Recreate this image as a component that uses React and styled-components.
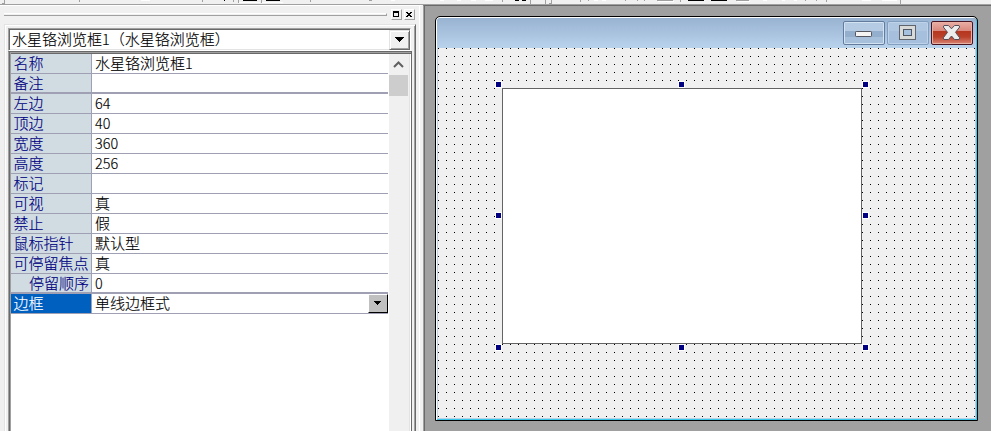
import React from "react";
import styled, { createGlobalStyle } from "styled-components";

const Global = createGlobalStyle`
  * { box-sizing: border-box; }
  body { margin: 0; background: #f0f0f0; overflow: hidden; }
`;

const Screen = styled.div`
  width: 991px;
  height: 431px;
  display: flex;
  flex-direction: column;
  overflow: hidden;
  background: #f0f0f0;
  color: #000;
  font: 300 15px/17px "Noto Sans CJK SC", sans-serif;
  -webkit-text-stroke: 0.15px;
`;
const Toolbar = styled.header`
  height: 5px;
  flex: none;
  border-bottom: 1px solid #a0a0a0;
  svg { display: block; }
`;
const Workspace = styled.main`
  flex: 1;
  display: flex;
  min-height: 0;
`;
const Sidebar = styled.aside`
  width: 423px;
  flex: none;
  display: flex;
  flex-direction: column;
  border-top: 1px solid #fff;
  border-right: 3px solid #f0f0f0;
  box-shadow: inset -1px 0 #fff;
`;
const Caption = styled.div`
  height: 18px;
  flex: none;
  display: flex;
  align-items: flex-start;
  padding: 3px 0 0 4px;
`;
const Grip = styled.div`
  flex: 1;
  height: 3px;
  margin: 4px 4px 0 0;
  border-top: 1px solid #fff;
  border-bottom: 1px solid #a0a0a0;
  border-right: 1px solid #a0a0a0;
`;
const CaptionButton = styled.span`
  width: 11px;
  height: 11px;
  margin-right: 2px;
  display: grid;
  place-items: center;
  border: 1px solid;
  border-color: #fff #a0a0a0 #a0a0a0 #fff;
  svg { display: block; }
`;
const CaptionEnd = styled.div`
  width: 3px;
`;
const Frame = styled.div`
  width: 412px;
  flex: 1;
  min-height: 0;
  margin-left: 4px;
  display: flex;
  flex-direction: column;
  border-top: 1px solid #e3e3e3;
  border-left: 1px solid #e3e3e3;
  border-right: 1px solid #696969;
  box-shadow: inset 1px 1px #fff, inset -1px 0 #a0a0a0;
  padding: 3px 3px 0;
`;
const Combo = styled.div`
  width: 403px;
  height: 23px;
  flex: none;
  display: flex;
  background: #fff;
  border-top: 1px solid #a0a0a0;
  border-left: 1px solid #a0a0a0;
  border-right: 1px solid #fff;
  border-bottom: 1px solid #fff;
  box-shadow: inset 1px 1px #696969, inset 0 -1px #e3e3e3;
  padding: 1px 0 0 3px;
`;
const ComboText = styled.div`
  flex: 1;
  white-space: pre;
`;
const DropButton = styled.span`
  width: ${(p) => (p.$small ? 20 : 21)}px;
  height: ${(p) => (p.$small ? 19 : 20)}px;
  flex: none;
  display: grid;
  place-items: center;
  background: ${(p) => (p.$small ? "#c0c0c0" : "#f0f0f0")};
  border: 1px solid;
  border-color: ${(p) => (p.$small ? "#fff #000 #000 #fff" : "#e3e3e3 #696969 #696969 #e3e3e3")};
  box-shadow: ${(p) => (p.$small ? "none" : "inset 1px 1px #fff, inset -1px -1px #a0a0a0")};
  svg { display: block; }
`;
const ListBox = styled.div`
  width: 404px;
  flex: 1;
  min-height: 0;
  display: flex;
  background: #fff;
  border-top: 1px solid #696969;
  border-left: 1px solid #a0a0a0;
  border-right: 1px solid #696969;
  box-shadow: inset 1px 0 #696969, inset 2px 1px #a0a0a0, inset 0 2px #696969,
    inset -1px 0 #fff, inset -2px 0 #e3e3e3;
  padding: 2px 2px 0;
`;
const Rows = styled.div`
  width: 378px;
  flex: none;
`;
const Row = styled.div`
  height: 20px;
  display: flex;
  width: 377px;
  border-bottom: ${(p) => (p.$thick ? 2 : 1)}px solid #a0a0b4;
`;
const Label = styled.div`
  width: 81px;
  flex: none;
  padding-left: ${(p) => (p.$indent ? 18 : 2.5)}px;
  white-space: nowrap;
  border-right: 1px solid #a0a0b4;
  background: ${(p) => (p.$active ? "#0060c0" : "#d0dce2")};
  color: ${(p) => (p.$active ? "#fff" : "#000080")};
`;
const Value = styled.div`
  flex: 1;
  display: flex;
  padding-left: 3px;
  background: #fff;
  white-space: nowrap;
`;
const ValueText = styled.div`
  flex: 1;
`;
const Digits = styled.span`
  font-size: 14.4px;
`;
const Scrollbar = styled.div`
  width: 20px;
  background: #f0f0f0;
  svg { display: block; }
`;
const Thumb = styled.div`
  width: 19px;
  height: 21px;
  background: #cdcdcd;
`;
const Mdi = styled.section`
  flex: 1;
  background: #a0a0a0;
  border-left: 1px solid #a0a0a0;
  border-top: 1px solid #696969;
  box-shadow: inset 1px 0 #696969;
  padding: 10px 0 0 11px;
`;
const Form = styled.div`
  width: 543px;
  height: 405px;
  display: flex;
  flex-direction: column;
  border: 1px solid #000;
  border-radius: 5px 5px 0 0;
  box-shadow: inset 1px 1px #fff, inset -1px -1px #38c8ec;
  padding: 1px;
`;
const TitleBar = styled.div`
  height: 30px;
  flex: none;
  display: flex;
  gap: 2px;
  justify-content: flex-end;
  padding: 3px 3px 0 0;
  border-radius: 3px 4px 0 0;
  background: linear-gradient(#98b3d1, #b9d2ec);
  svg { display: block; }
`;
const Canvas = styled.div`
  position: relative;
  flex: 1;
  border-left: 1px solid #c0d4ea;
  border-right: 1px solid #bad0e4;
  border-bottom: 1px solid #bad0e4;
  background: conic-gradient(from 0deg at 1px 1px, #f0f0f0 270deg, #000 270deg) 0 0 / 8px 8px;
`;
const BrowserBox = styled.div`
  position: absolute;
  left: 64px;
  top: 40px;
  width: 360px;
  height: 256px;
  background: #fff;
  border: 1px solid #646464;
`;
const Handle = styled.i`
  position: absolute;
  left: ${(p) => p.$x}px;
  top: ${(p) => p.$y}px;
  width: 7px;
  height: 7px;
  background: #000080;
  border: 1px solid #fff;
`;

const ROWS = [
  { name: "名称", text: "水星铬浏览框", num: "1" },
  { name: "备注", thick: true },
  { name: "左边", num: "64" },
  { name: "顶边", num: "40" },
  { name: "宽度", num: "360" },
  { name: "高度", num: "256" },
  { name: "标记" },
  { name: "可视", text: "真" },
  { name: "禁止", text: "假" },
  { name: "鼠标指针", text: "默认型" },
  { name: "可停留焦点", text: "真" },
  { name: "停留顺序", num: "0", indent: true, thick: true },
  { name: "边框", text: "单线边框式", active: true },
];

const HANDLES = [
  [57, 33], [240, 33], [424, 33],
  [57, 164], [424, 164],
  [57, 296], [240, 296], [424, 296],
];

/* x, y, width, height, colour of each clipped toolbar glyph */
const MARKS = [
  [4, 0, 1, 4, "#a0a0a0"], [2, 3, 3, 1, "#a0a0a0"], [79, 0, 1, 2, "#a0a0a0"],
  [141, 0, 9, 1, "#fff"], [202, 0, 1, 2, "#a0a0a0"], [224, 0, 1, 1, "#000"],
  [233, 0, 1, 2, "#a0a0a0"], [238, 0, 1, 3, "#a0a0a0"], [243, 0, 14, 1, "#000"],
  [261, 0, 1, 3, "#a0a0a0"], [266, 0, 14, 1, "#000"], [239, 2, 21, 1, "#fff"],
  [262, 2, 21, 1, "#fff"], [310, 0, 1, 2, "#a0a0a0"], [369, 0, 3, 1, "#a0a0a0"],
  [391, 0, 4, 1, "#fff"], [440, 0, 4, 1, "#fff"], [457, 0, 4, 1, "#fff"],
  [471, 0, 5, 1, "#fff"], [485, 0, 8, 1, "#fff"],
  [502, 0, 1, 2, "#a0a0a0"], [515, 0, 4, 1, "#000"], [522, 0, 4, 1, "#000"],
  [530, 0, 1, 4, "#a0a0a0"], [545, 0, 1, 4, "#a0a0a0"], [551, 0, 1, 4, "#a0a0a0"],
  [549, 3, 3, 1, "#a0a0a0"], [580, 0, 1, 2, "#a0a0a0"], [588, 0, 1, 1, "#a0a0a0"],
  [594, 0, 4, 1, "#fff"], [602, 0, 4, 1, "#fff"], [625, 0, 1, 1, "#a0a0a0"],
  [637, 0, 1, 1, "#a0a0a0"], [644, 0, 1, 1, "#a0a0a0"], [657, 0, 16, 1, "#a0a0a0"],
  [658, 1, 16, 1, "#fff"], [680, 0, 1, 2, "#a0a0a0"], [688, 0, 16, 1, "#000"],
  [711, 0, 16, 1, "#000"], [736, 0, 13, 1, "#a0a0a0"], [737, 1, 13, 1, "#fff"],
  [763, 0, 4, 1, "#fff"], [782, 0, 3, 1, "#fff"], [794, 0, 3, 1, "#fff"],
  [805, 0, 1, 1, "#a0a0a0"], [816, 0, 1, 1, "#a0a0a0"], [826, 0, 1, 2, "#a0a0a0"],
  [862, 0, 9, 1, "#fff"], [882, 0, 15, 1, "#fff"], [900, 0, 1, 4, "#a0a0a0"],
];

const Minimize = () => (
  <svg width="42" height="24" viewBox="0 0 42 24">
    <rect x=".5" y=".5" width="41" height="23" rx="1.5" fill="#b6cce4" stroke="#637b9c" />
    <rect x="1.5" y="1.5" width="39" height="21" rx="1" fill="#b5cbe3" stroke="#d4e3f2" />
    <rect x="2" y="10" width="38" height="11" fill="#94aecd" />
    <rect x="2" y="16" width="38" height="6" fill="#a6bfdb" />
    <rect x="12.5" y="10.5" width="16" height="5" rx=".7" fill="#f4f4f4" stroke="#53565f" />
  </svg>
);
const Maximize = () => (
  <svg width="42" height="24" viewBox="0 0 42 24">
    <rect x=".5" y=".5" width="41" height="23" rx="1.5" fill="#abc4df" stroke="#839fc0" />
    <rect x="1.5" y="1.5" width="39" height="21" rx="1" fill="#afc7e1" stroke="#bed3e9" />
    <rect x="2" y="10" width="38" height="12" fill="#a5bfdc" />
    <rect x="12.5" y="4.5" width="16" height="14" fill="#d8dad9" stroke="#60656d" />
    <rect x="16.5" y="8.5" width="8" height="6" fill="#a6c0df" stroke="#4d5661" />
  </svg>
);
const Close = () => (
  <svg width="42" height="24" viewBox="0 0 42 24">
    <defs>
      <linearGradient id="redTop" x2="0" y2="1">
        <stop stopColor="#e7aaa0" /><stop offset="1" stopColor="#d9877b" />
      </linearGradient>
      <linearGradient id="redLow" x2="0" y2="1">
        <stop stopColor="#b5361e" /><stop offset=".5" stopColor="#bb412b" /><stop offset="1" stopColor="#d57b6a" />
      </linearGradient>
    </defs>
    <rect x=".5" y=".5" width="41" height="23" rx="1.5" fill="#e9b0a4" stroke="#481421" />
    <rect x="2" y="2" width="38" height="8" fill="url(#redTop)" />
    <rect x="2" y="10" width="38" height="12" fill="url(#redLow)" />
    <path d="M13 4.5H17.5L20.5 7.8L23.5 4.5H28L28.7 6L24.5 11.3L28.7 16.8L28 18.5H23.5L20.5 15L17.5 18.5H13L12.3 16.8L16.5 11.3L12.3 6Z"
      fill="#ececec" stroke="#51505a" strokeLinejoin="round" />
  </svg>
);
const Arrow = () => (
  <svg width="9" height="6" shapeRendering="crispEdges">
    <path d="M0 0h9v1h-1v1h-1v1h-1v1h-1v1h-1v-1h-1v-1h-1v-1h-1v-1h-1z" />
  </svg>
);
const SmallArrow = () => (
  <svg width="8" height="5" shapeRendering="crispEdges">
    <path d="M0 0h7v1h-1v1h-1v1h-1v1h-1v-1h-1v-1h-1v-1h-1z" />
  </svg>
);

export default function App() {
  return (
    <Screen>
      <Global />
      <Toolbar>
        <svg width="991" height="4" shapeRendering="crispEdges">
          {MARKS.map(([x, y, w, h, c], i) => (
            <rect key={i} x={x} y={y} width={w} height={h} fill={c} />
          ))}
        </svg>
      </Toolbar>
      <Workspace>
        <Sidebar>
          <Caption>
            <Grip />
            <CaptionButton>
              <svg width="7" height="7" shapeRendering="crispEdges">
                <path d="M0 0h6v6h-6z M1 2v3h4v-3z" fillRule="evenodd" />
              </svg>
            </CaptionButton>
            <CaptionButton>
              <svg width="7" height="7" shapeRendering="crispEdges">
                <path d="M0 1h2v1h2v-1h2v1h-1v1h-1v1h1v1h1v1h-2v-1h-2v1h-2v-1h1v-1h1v-1h-1v-1h-1z" />
              </svg>
            </CaptionButton>
            <CaptionEnd />
          </Caption>
          <Frame>
            <Combo>
              <ComboText>水星铬浏览框<Digits>1</Digits>（水星铬浏览框）</ComboText>
              <DropButton><Arrow /></DropButton>
            </Combo>
            <ListBox>
              <Rows>
                {ROWS.map((r) => (
                  <Row key={r.name} $thick={r.thick}>
                    <Label $indent={r.indent} $active={r.active}>{r.name}</Label>
                    <Value>
                      <ValueText>{r.text}{r.num && <Digits>{r.num}</Digits>}</ValueText>
                      {r.active && <DropButton $small><SmallArrow /></DropButton>}
                    </Value>
                  </Row>
                ))}
              </Rows>
              <Scrollbar>
                <svg width="20" height="21">
                  <path d="M5 13L9.5 8.5L14 13" fill="none" stroke="#606060" strokeWidth="2" />
                </svg>
                <Thumb />
              </Scrollbar>
            </ListBox>
          </Frame>
        </Sidebar>
        <Mdi>
          <Form>
            <TitleBar><Minimize /><Maximize /><Close /></TitleBar>
            <Canvas>
              <BrowserBox />
              {HANDLES.map(([x, y]) => <Handle key={`${x}-${y}`} $x={x} $y={y} />)}
            </Canvas>
          </Form>
        </Mdi>
      </Workspace>
    </Screen>
  );
}
